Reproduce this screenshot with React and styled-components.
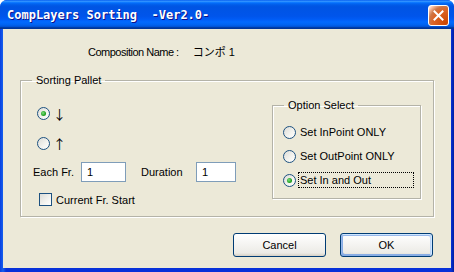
import React from 'react';
import styled, { createGlobalStyle } from 'styled-components';

const GlobalStyle = createGlobalStyle`
  html, body {
    margin: 0;
    padding: 0;
    background: #ffffff;
  }
  body {
    font-family: "Liberation Sans", Arial, sans-serif;
    font-size: 11px;
    color: #000;
  }
`;

const Window = styled.div`
  width: 454px;
  height: 272px;
  display: flex;
  flex-direction: column;
  background: linear-gradient(to right, #0a3fe0 0, #1660ee 3px, #0831d9 6px, #0831d9 calc(100% - 3px), #001ea0 100%);
  border-radius: 7px 7px 0 0;
  overflow: hidden;
`;

const TitleBar = styled.div`
  height: 29px;
  flex: none;
  display: flex;
  align-items: center;
  justify-content: space-between;
  padding: 0 5px 0 7px;
  background: linear-gradient(
    to bottom,
    #0058ee 0%, #3593ff 4%, #288eff 6%, #127dff 8%, #036ffc 10%,
    #0262ee 14%, #0057e5 20%, #0054e3 24%, #0055eb 56%, #005bf5 66%,
    #026afe 76%, #0062ef 86%, #0052d6 92%, #0040ab 94%, #003092 100%
  );
`;

const TitleText = styled.span`
  font-family: "DejaVu Sans Mono", "Liberation Mono", monospace;
  font-weight: bold;
  font-size: 12px;
  color: #fff;
  white-space: pre;
  text-shadow: 1px 1px #0f1089;
  margin-top: 1px;
`;

const CloseButton = styled.div`
  width: 21px;
  height: 21px;
  box-sizing: border-box;
  border: 1px solid #fff;
  border-radius: 3px;
  display: flex;
  align-items: center;
  justify-content: center;
  margin-top: 1px;
  background: radial-gradient(circle at 90% 90%, #cc4600 0%, #dc6527 55%, #cd7546 70%, #ffccb2 90%, #ffffff 100%);
`;

const Client = styled.div`
  flex: 1;
  margin: 0 3px 4px 3px;
  background: #ece9d8;
  display: flex;
  flex-direction: column;
  align-items: flex-start;
`;

const CompLine = styled.div`
  margin: 16px 0 0 85px;
  line-height: 14px;
  white-space: nowrap;
  letter-spacing: -0.5px;
`;

const CompName = styled.span`
  margin-left: 14px;
  letter-spacing: 0;
  font-family: "Liberation Sans", "Noto Sans CJK JP", sans-serif;
`;

const Group = styled.fieldset`
  box-sizing: border-box;
  width: ${(p) => p.$width}px;
  margin: ${(p) => p.$margin};
  padding: 0;
  min-width: 0;
  border: 1px solid #b4b3a8;
  box-shadow: 1px 1px 0 #fff, inset 1px 1px 0 #fff;
`;

const Legend = styled.legend`
  margin-left: 11px;
  padding: 0 4px;
  line-height: 14px;
  font-size: 11px;
`;

const GroupBody = styled.div`
  display: flex;
  align-items: flex-start;
  justify-content: space-between;
  padding-bottom: 10px;
`;

const LeftCol = styled.div`
  display: flex;
  flex-direction: column;
`;

const RadioRow = styled.div`
  display: flex;
  align-items: center;
  height: ${(p) => p.$h || 13}px;
  margin: ${(p) => p.$margin};
`;

const Radio = styled.span`
  position: relative;
  flex: none;
  width: 13px;
  height: 13px;
  box-sizing: border-box;
  border-radius: 50%;
  border: 1px solid #1c5180;
  background: linear-gradient(135deg, #dcdcd7 0%, #f4f4f0 60%, #ffffff 100%);

  &::after {
    content: '';
    display: ${(p) => (p.$checked ? 'block' : 'none')};
    position: absolute;
    left: 3px;
    top: 3px;
    width: 5px;
    height: 5px;
    border-radius: 50%;
    background: radial-gradient(circle at 40% 40%, #7ee07e 0%, #21a121 60%, #1a8a1a 100%);
  }
`;

const Arrow = styled.span`
  margin-left: 3px;
  font-family: "Noto Sans CJK JP", sans-serif;
  font-size: 13px;
  line-height: 13px;
`;

const FieldRow = styled.div`
  display: flex;
  align-items: center;
  margin: 12px 0 0 12px;
`;

const FieldLabel = styled.span`
  width: ${(p) => p.$w}px;
  margin-left: ${(p) => p.$ml || 0}px;
`;

const TextBox = styled.div`
  box-sizing: border-box;
  width: ${(p) => p.$w}px;
  height: 20px;
  border: 1px solid #7f9db9;
  background: #fff;
  padding-left: 5px;
  line-height: 18px;
`;

const CheckRow = styled.div`
  display: flex;
  align-items: center;
  height: 13px;
  margin: 11px 0 0 18px;
  gap: 4px;
`;

const Check = styled.span`
  width: 13px;
  height: 13px;
  box-sizing: border-box;
  border: 1px solid #1c5180;
  background: linear-gradient(135deg, #dcdcd7 0%, #f4f4f0 60%, #ffffff 100%);
`;

const OptionList = styled.div`
  display: flex;
  flex-direction: column;
  gap: 8px;
  padding: 12px 0 10px 10px;
`;

const OptionLabel = styled.span`
  box-sizing: border-box;
  width: 116px;
  height: 16px;
  margin-left: 2px;
  padding-left: 1px;
  line-height: 14px;
  border: 1px dotted ${(p) => (p.$focused ? '#000' : 'transparent')};
`;

const ButtonRow = styled.div`
  align-self: stretch;
  display: flex;
  justify-content: flex-end;
  gap: 14px;
  margin: 16px 18px 0 0;
`;

const Button = styled.div`
  box-sizing: border-box;
  width: 93px;
  height: 24px;
  display: flex;
  align-items: center;
  justify-content: center;
  border: 1px solid #003c74;
  border-radius: 3px;
  background: linear-gradient(180deg, #ffffff 0%, #ecebe6 86%, #d6d0c5 100%);
  box-shadow: ${(p) =>
    p.$default
      ? 'inset -1px 1px #cee7ff, inset 1px 2px #98b8ea, inset -2px 2px #bcd4f6, inset 1px -1px #89ade4, inset 2px -2px #89ade4'
      : 'none'};
`;

const options = [
  { label: 'Set InPoint ONLY' },
  { label: 'Set OutPoint ONLY' },
  { label: 'Set In and Out', checked: true }
];

const App = () => (
  <>
    <GlobalStyle />
    <Window>
      <TitleBar>
        <TitleText>CompLayers Sorting  -Ver2.0-</TitleText>
        <CloseButton>
          <svg width="11" height="11" viewBox="0 0 11 11">
            <path d="M1.5 1.5 L9.5 9.5 M9.5 1.5 L1.5 9.5" stroke="#fff" strokeWidth="2" strokeLinecap="square" />
          </svg>
        </CloseButton>
      </TitleBar>
      <Client>
        <CompLine>
          Composition Name :
          <CompName>コンポ 1</CompName>
        </CompLine>
        <Group $width={414} $margin="14px 0 0 17px">
          <Legend>Sorting Pallet</Legend>
          <GroupBody>
            <LeftCol>
              <RadioRow $margin="20px 0 0 16px">
                <Radio $checked />
                <Arrow>↓</Arrow>
              </RadioRow>
              <RadioRow $margin="17px 0 0 16px">
                <Radio />
                <Arrow>↑</Arrow>
              </RadioRow>
              <FieldRow>
                <FieldLabel $w={48}>Each Fr.</FieldLabel>
                <TextBox $w={45}>1</TextBox>
                <FieldLabel $w={55} $ml={15}>Duration</FieldLabel>
                <TextBox $w={40}>1</TextBox>
              </FieldRow>
              <CheckRow>
                <Check />
                <span>Current Fr. Start</span>
              </CheckRow>
            </LeftCol>
            <Group $width={149} $margin="11px 12px 0 0">
              <Legend>Option Select</Legend>
              <OptionList>
                {options.map((o) => (
                  <RadioRow key={o.label} $h={16}>
                    <Radio $checked={o.checked} />
                    <OptionLabel $focused={o.checked}>{o.label}</OptionLabel>
                  </RadioRow>
                ))}
              </OptionList>
            </Group>
          </GroupBody>
        </Group>
        <ButtonRow>
          <Button>Cancel</Button>
          <Button $default>OK</Button>
        </ButtonRow>
      </Client>
    </Window>
  </>
);

export default App;
